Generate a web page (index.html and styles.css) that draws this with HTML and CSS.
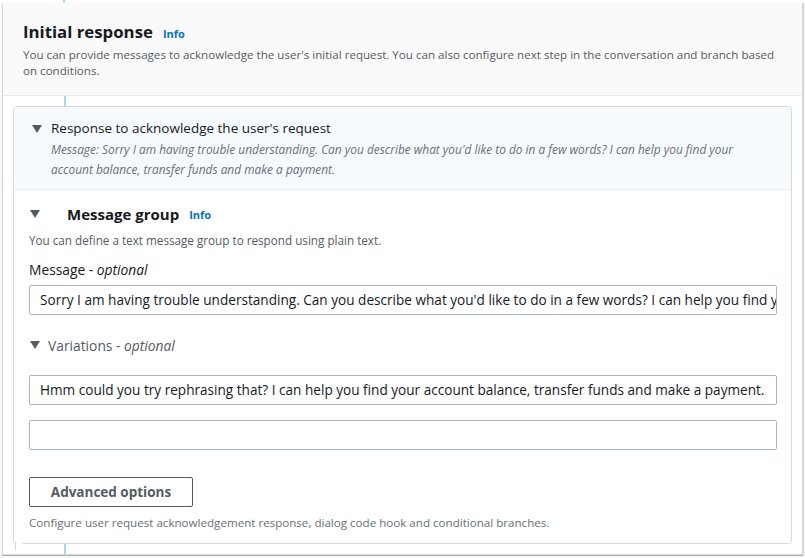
FILE: index.html
```html
<!DOCTYPE html>
<html>
<head>
<meta charset="utf-8">
<link rel="stylesheet" href="styles.css">
</head>
<body>
<div class="page">
  <div class="connector connector-top"></div>
  <section class="card">
    <header class="card-header">
      <h2 class="title">Initial response <a class="info">Info</a></h2>
      <p class="desc">You can provide messages to acknowledge the user's initial request. You can also configure next step in the conversation and branch based on conditions.</p>
    </header>
    <div class="card-body">
      <div class="connector connector-mid"></div>
      <div class="bubble">
        <div class="summary">
          <svg class="caret" width="10" height="8" viewBox="0 0 10 8"><path d="M0 0H10L5 8Z" fill="#545b64"/></svg>
          <div class="summary-text">
            <div class="summary-title">Response to acknowledge the user's request</div>
            <div class="summary-msg">Message: Sorry I am having trouble understanding. Can you describe what you'd like to do in a few words? I can help you find your account balance, transfer funds and make a payment.</div>
          </div>
        </div>
        <div class="group">
          <div class="group-head">
            <svg class="caret" width="10" height="8" viewBox="0 0 10 8"><path d="M0 0H10L5 8Z" fill="#545b64"/></svg>
            <h3 class="group-title">Message group</h3>
            <a class="info">Info</a>
          </div>
          <p class="group-desc">You can define a text message group to respond using plain text.</p>
          <label class="label">Message - <i>optional</i></label>
          <div class="input">Sorry I am having trouble understanding. Can you describe what you'd like to do in a few words? I can help you find your account balance, transfer funds and make a payment.</div>
          <div class="variations">
            <svg class="caret" width="10" height="8" viewBox="0 0 10 8"><path d="M0 0H10L5 8Z" fill="#545b64"/></svg>
            <span>Variations - <i>optional</i></span>
          </div>
          <div class="input">Hmm could you try rephrasing that? I can help you find your account balance, transfer funds and make a payment.</div>
          <div class="input input-empty"></div>
          <button class="btn">Advanced options</button>
          <p class="foot">Configure user request acknowledgement response, dialog code hook and conditional branches.</p>
        </div>
        <div class="tail"></div>
      </div>
      <div class="connector connector-bottom"></div>
    </div>
  </section>
</div>
</body>
</html>
```
FILE: styles.css
```css
* { box-sizing: border-box; }
html, body { margin: 0; padding: 0; background: #fff; }
body {
  font-family: "Open Sans", "Noto Sans", sans-serif;
  color: #16191f;
  width: 805px;
  height: 558px;
  overflow: hidden;
}
.page { padding-left: 2px; }
.connector {
  width: 2px;
  background: #a6dce6;
  margin-left: 61px;
}
.connector-top { height: 3px; }
.card {
  width: 801px;
  height: 552px;
  border: 1px solid #d5dbdb;
  border-top: none;
  box-shadow: 0 1px 1px rgba(0,28,36,0.3), 1px 0 1px rgba(0,28,36,0.15);
  display: flex;
  flex-direction: column;
}
.card-header {
  background: #fafafa;
  border-bottom: 1px solid #eaeded;
  padding: 16px 20px 0 20px;
  height: 94px;
}
.title {
  margin: 0;
  font-size: 16.8px;
  font-weight: 700;
  line-height: 26px;
  display: flex;
  align-items: baseline;
}
.info {
  color: #0073bb;
  font-size: 11px;
  font-weight: 700;
  margin-left: 10px;
}
.desc {
  margin: 0;
  font-size: 11.6px;
  line-height: 16px;
  color: #545b64;
}
.card-body {
  padding: 0 10px 0 10px;
  display: flex;
  flex-direction: column;
  flex: 1;
}
.card-body .connector { margin-left: 51px; }
.connector-mid { height: 10px; }
.connector-bottom { height: 10px; margin-top: 0; }
.bubble {
  position: relative;
  border: 1px solid #d5dbdb;
  border-radius: 4px;
  height: 438px;
  width: 779px;
}
.summary {
  background: #f6fafd;
  border-bottom: 1px solid #eaeded;
  border-radius: 4px 4px 0 0;
  display: flex;
  padding: 13px 18px 11px 18px;
  height: 83px;
}
.summary .caret { margin-top: 5px; margin-right: 9px; flex: none; }
.summary-title { font-size: 13.5px; line-height: 17px; }
.summary-msg {
  font-style: italic;
  font-size: 11.9px;
  line-height: 20px;
  color: #687078;
  margin-top: 2px;
  max-width: 700px;
}
.group { padding: 11px 15px 0 15px; }
.group-head { display: flex; align-items: center; height: 26px; }
.group-head .caret { margin-left: 1px; margin-right: 27px; }
.group-title { margin: 0; font-size: 15px; font-weight: 700; line-height: 20px; }
.group-head .info { margin-left: 10px; }
.group-desc {
  margin: 5px 0 0 0;
  font-size: 11.7px;
  line-height: 16px;
  color: #545b64;
}
.label {
  display: block;
  font-size: 13.8px;
  line-height: 18px;
  margin-top: 13px;
}
.input {
  margin-top: 6px;
  height: 30px;
  width: 748px;
  border: 1px solid #aab7b8;
  border-radius: 2px;
  padding: 0 10px;
  font-size: 13.6px;
  line-height: 28px;
  white-space: nowrap;
  overflow: hidden;
}
.variations {
  display: flex;
  align-items: center;
  margin-top: 21px;
  height: 18px;
  font-size: 13.8px;
  color: #545b64;
}
.variations .caret { margin-left: 1px; margin-right: 8px; }
.variations + .input { margin-top: 21px; }
.input-empty { margin-top: 15px; }
.btn {
  display: block;
  margin-top: 27px;
  width: 164px;
  height: 30px;
  background: #fff;
  border: 1px solid #545b64;
  border-radius: 2px;
  font-family: inherit;
  font-size: 13.5px;
  font-weight: 700;
  color: #545b64;
}
.foot {
  margin: 8px 0 0 0;
  font-size: 11.6px;
  line-height: 16px;
  color: #687078;
}
.tail {
  position: absolute;
  left: 1px;
  bottom: -8px;
  width: 9px;
  height: 9px;
  background: #fff;
  border-left: 1px solid #d5dbdb;
  border-bottom: 1px solid #d5dbdb;
  clip-path: polygon(0 0, 100% 0, 0 100%);
}
```
